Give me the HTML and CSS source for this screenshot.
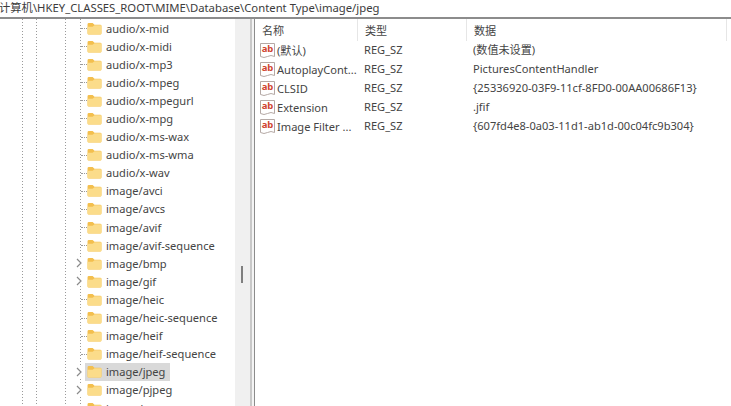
FILE: index.html
```html
<!DOCTYPE html>
<html lang="zh-CN">
<head>
    <meta charset="UTF-8">
    <meta name="viewport" content="width=device-width, initial-scale=1.0">
    <title>Registry Editor</title>
    <link rel="stylesheet" href="styles.css">
</head>
<body>
    <svg class="defs" width="0" height="0">
        <symbol id="folder" viewBox="0 0 16 14">
            <path d="M0.5 2.5 Q0.5 1 2 1 H6 L8 3 H14 Q15.5 3 15.5 4.5 V12 Q15.5 13.5 14 13.5 H2 Q0.5 13.5 0.5 12 Z" fill="#f3bf4e"/>
            <path d="M0.5 5 L6 5 L8 3.6 H15.5 V12 Q15.5 13.5 14 13.5 H2 Q0.5 13.5 0.5 12 Z" fill="#fbdc8a"/>
        </symbol>
        <symbol id="chevron" viewBox="0 0 8 10">
            <path d="M2 1 L6 5 L2 9" fill="none" stroke="#8a8a8a" stroke-width="1.2"/>
        </symbol>
        <symbol id="page" viewBox="0 0 15 16">
            <path d="M0.5 0.5 H14.5 V13.5 Q11 11.5 7.5 13.5 Q4 15.5 0.5 13.5 Z" fill="#fff" stroke="#b5a9a5"/>
        </symbol>
    </svg>
    <header class="path">计算机\HKEY_CLASSES_ROOT\MIME\Database\Content Type\image/jpeg</header>
    <main class="panes">
        <nav class="tree">
            <div class="rows">
                <div class="row leaf"><svg class="folder"><use href="#folder"/></svg><span>audio/x-mid</span></div>
                <div class="row leaf"><svg class="folder"><use href="#folder"/></svg><span>audio/x-midi</span></div>
                <div class="row leaf"><svg class="folder"><use href="#folder"/></svg><span>audio/x-mp3</span></div>
                <div class="row leaf"><svg class="folder"><use href="#folder"/></svg><span>audio/x-mpeg</span></div>
                <div class="row leaf"><svg class="folder"><use href="#folder"/></svg><span>audio/x-mpegurl</span></div>
                <div class="row leaf"><svg class="folder"><use href="#folder"/></svg><span>audio/x-mpg</span></div>
                <div class="row leaf"><svg class="folder"><use href="#folder"/></svg><span>audio/x-ms-wax</span></div>
                <div class="row leaf"><svg class="folder"><use href="#folder"/></svg><span>audio/x-ms-wma</span></div>
                <div class="row leaf"><svg class="folder"><use href="#folder"/></svg><span>audio/x-wav</span></div>
                <div class="row leaf"><svg class="folder"><use href="#folder"/></svg><span>image/avci</span></div>
                <div class="row leaf"><svg class="folder"><use href="#folder"/></svg><span>image/avcs</span></div>
                <div class="row leaf"><svg class="folder"><use href="#folder"/></svg><span>image/avif</span></div>
                <div class="row leaf"><svg class="folder"><use href="#folder"/></svg><span>image/avif-sequence</span></div>
                <div class="row"><svg class="chevron"><use href="#chevron"/></svg><svg class="folder"><use href="#folder"/></svg><span>image/bmp</span></div>
                <div class="row"><svg class="chevron"><use href="#chevron"/></svg><svg class="folder"><use href="#folder"/></svg><span>image/gif</span></div>
                <div class="row leaf"><svg class="folder"><use href="#folder"/></svg><span>image/heic</span></div>
                <div class="row leaf"><svg class="folder"><use href="#folder"/></svg><span>image/heic-sequence</span></div>
                <div class="row leaf"><svg class="folder"><use href="#folder"/></svg><span>image/heif</span></div>
                <div class="row leaf"><svg class="folder"><use href="#folder"/></svg><span>image/heif-sequence</span></div>
                <div class="row selected"><svg class="chevron"><use href="#chevron"/></svg><svg class="folder"><use href="#folder"/></svg><span>image/jpeg</span></div>
                <div class="row"><svg class="chevron"><use href="#chevron"/></svg><svg class="folder"><use href="#folder"/></svg><span>image/pjpeg</span></div>
                <div class="row leaf"><svg class="folder"><use href="#folder"/></svg><span>image/png</span></div>
            </div>
            <div class="scrollbar"><div class="thumb"></div></div>
        </nav>
        <div class="splitter"></div>
        <section class="values">
            <div class="head">
                <div class="col-name">名称</div>
                <div class="col-type">类型</div>
                <div class="col-data">数据</div>
            </div>
            <div class="value"><div class="col-name"><span class="ab"><svg class="page"><use href="#page"/></svg><b>ab</b></span><span class="name">(默认)</span></div><div class="col-type">REG_SZ</div><div class="col-data">(数值未设置)</div></div>
            <div class="value"><div class="col-name"><span class="ab"><svg class="page"><use href="#page"/></svg><b>ab</b></span><span class="name">AutoplayCont...</span></div><div class="col-type">REG_SZ</div><div class="col-data">PicturesContentHandler</div></div>
            <div class="value"><div class="col-name"><span class="ab"><svg class="page"><use href="#page"/></svg><b>ab</b></span><span class="name">CLSID</span></div><div class="col-type">REG_SZ</div><div class="col-data">{25336920-03F9-11cf-8FD0-00AA00686F13}</div></div>
            <div class="value"><div class="col-name"><span class="ab"><svg class="page"><use href="#page"/></svg><b>ab</b></span><span class="name">Extension</span></div><div class="col-type">REG_SZ</div><div class="col-data">.jfif</div></div>
            <div class="value"><div class="col-name"><span class="ab"><svg class="page"><use href="#page"/></svg><b>ab</b></span><span class="name">Image Filter ...</span></div><div class="col-type">REG_SZ</div><div class="col-data">{607fd4e8-0a03-11d1-ab1d-00c04fc9b304}</div></div>
        </section>
    </main>
</body>
</html>
```

FILE: styles.css
```css
html, body {
    margin: 0;
    height: 100%;
    overflow: hidden;
}
body {
    font-family: "Noto Sans", "Noto Sans CJK SC", sans-serif;
    font-size: 11.1px;
    color: #444;
    background: #fff;
    display: flex;
    flex-direction: column;
}
.defs {
    position: absolute;
}
.path {
    height: 17px;
    line-height: 15px;
    font-size: 11.3px;
    white-space: nowrap;
    flex: none;
    border-bottom: 2px solid #8c8c8c;
    color: #3c3c3c;
    text-indent: -1px;
}
.panes {
    flex: 1;
    display: flex;
    min-height: 0;
}
.tree {
    width: 250px;
    flex: none;
    display: flex;
    background-image:
        repeating-linear-gradient(to bottom, #9a9a9a 0 1px, transparent 1px 3px),
        repeating-linear-gradient(to bottom, #9a9a9a 0 1px, transparent 1px 3px),
        repeating-linear-gradient(to bottom, #9a9a9a 0 1px, transparent 1px 3px),
        repeating-linear-gradient(to bottom, #9a9a9a 0 1px, transparent 1px 3px);
    background-size: 1px 100%;
    background-repeat: no-repeat;
    background-position: 22px 0, 36px 0, 65px 0, 80px 0;
}
.rows {
    flex: 1;
    overflow: hidden;
}
.row {
    height: 18.1px;
    display: flex;
    align-items: center;
    padding-left: 87px;
    position: relative;
    white-space: nowrap;
}
.row span {
    margin-left: 4px;
}
.leaf::before {
    content: "";
    position: absolute;
    left: 81px;
    width: 6px;
    top: 9px;
    border-top: 1px dotted #9a9a9a;
}
.folder {
    width: 15px;
    height: 13px;
    flex: none;
}
.chevron {
    position: absolute;
    left: 75px;
    top: 4px;
    width: 8px;
    height: 10px;
    background: #fff;
}
.selected::after {
    content: "";
    position: absolute;
    left: 85px;
    top: 0;
    width: 85px;
    height: 100%;
    background: #d9d9d9;
    z-index: -1;
}
.scrollbar {
    width: 15px;
    flex: none;
    background: #f0f0f0;
    position: relative;
}
.thumb {
    position: absolute;
    left: 6px;
    top: 247px;
    width: 2px;
    height: 17px;
    background: #7f7f7f;
}
.splitter {
    width: 5px;
    flex: none;
    box-sizing: border-box;
    border-left: 2px solid #c8c8c8;
    border-right: 1px solid #8c8c8c;
    background: #f4f4f4;
}
.values {
    flex: 1;
    min-width: 0;
}
.head, .value {
    display: flex;
    white-space: nowrap;
}
.head {
    height: 22px;
    line-height: 23px;
}
.head > div {
    padding-left: 7px;
    box-sizing: border-box;
    border-right: 1px solid #e6e6e6;
}
.value {
    height: 19px;
    line-height: 18px;
}
.value > div {
    box-sizing: border-box;
    padding-left: 6px;
}
.col-name {
    width: 103px;
}
.col-type {
    width: 109px;
}
.col-data {
    width: 260px;
}
.value .col-name {
    padding-left: 5px;
    display: flex;
    align-items: center;
}
.ab {
    position: relative;
    width: 15px;
    height: 15px;
    margin-right: 2px;
    flex: none;
}
.page {
    width: 15px;
    height: 16px;
    display: block;
}
.ab b {
    position: absolute;
    left: 0;
    top: 0;
    width: 15px;
    color: #d0452f;
    font-size: 9.5px;
    line-height: 11px;
    text-align: center;
}
```
